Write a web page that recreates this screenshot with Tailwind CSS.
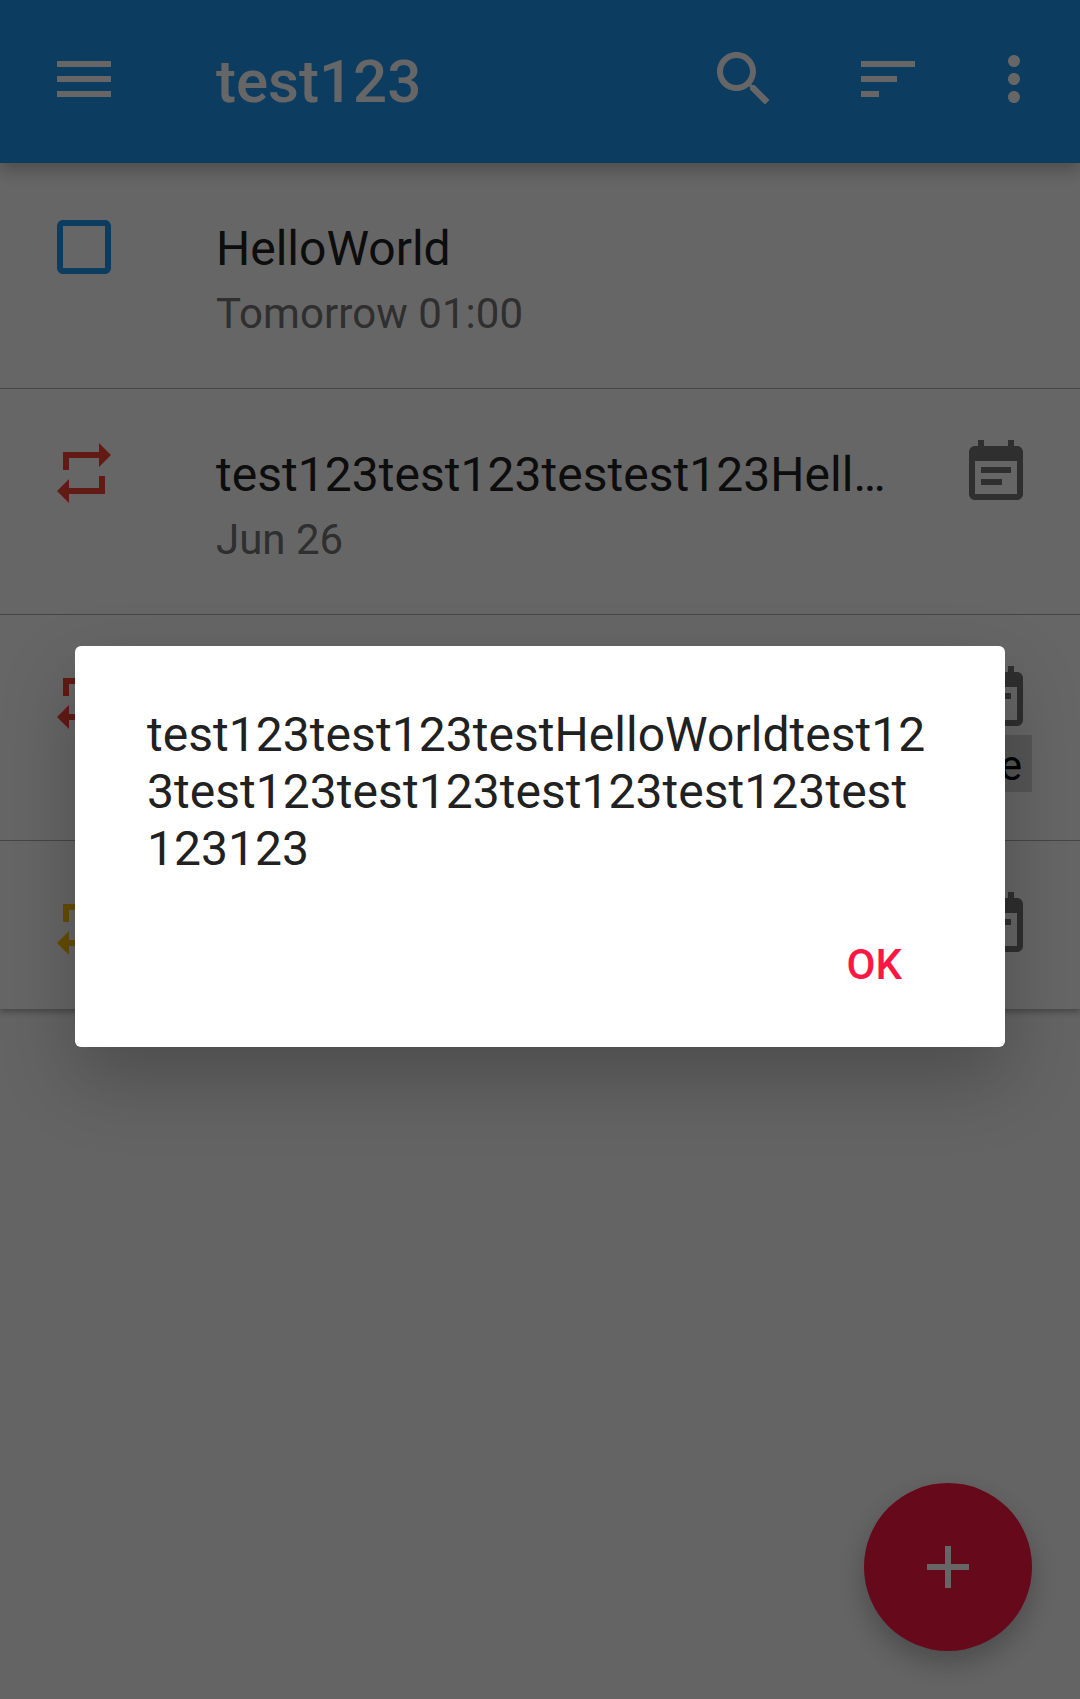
<!DOCTYPE html>
<html lang="en">
<head>
<meta charset="utf-8">
<title>test123</title>
<script src="https://cdn.jsdelivr.net/npm/@tailwindcss/browser@4"></script>
</head>
<body class="relative h-[1699px] w-[1080px] overflow-hidden bg-[#fafafa] font-['Roboto',sans-serif] text-[#212121]">
<svg class="hidden">
  <symbol id="repeat" viewBox="0 0 24 24"><path d="M7 7h10v3l4-4-4-4v3H5v6h2V7zm10 10H7v-3l-4 4 4 4v-3h12v-6h-2v4z"/></symbol>
  <symbol id="note" viewBox="0 0 24 24"><path d="M17 10H7v2h10v-2zm2-7h-1V1h-2v2H8V1H6v2H5c-1.11 0-1.99.9-1.99 2L3 19c0 1.1.89 2 2 2h14c1.1 0 2-.9 2-2V5c0-1.1-.9-2-2-2zm0 16H5V8h14v11zm-5-5H7v2h7v-2z"/></symbol>
</svg>

<header class="relative flex h-[163px] items-start bg-[#2196f3] pl-12 pt-[43px] text-white shadow-[0_8px_16px_rgba(0,0,0,0.24)]">
  <svg class="size-[72px] shrink-0" viewBox="0 0 24 24" fill="currentColor"><path d="M3 18h18v-2H3v2zm0-5h18v-2H3v2zm0-7v2h18V6H3z"/></svg>
  <h1 class="ml-24 w-[492px] pt-[4px] text-[60px] leading-[70px] font-medium">test123</h1>
  <svg class="size-[72px] shrink-0" viewBox="0 0 24 24" fill="currentColor"><path d="M15.5 14h-.79l-.28-.27C15.41 12.59 16 11.11 16 9.5 16 5.91 13.09 3 9.5 3S3 5.91 3 9.5 5.91 16 9.5 16c1.61 0 3.09-.59 4.23-1.57l.27.28v.79l5 4.99L20.49 19l-4.99-5zm-6 0C7.01 14 5 11.99 5 9.5S7.01 5 9.5 5 14 7.01 14 9.5 11.99 14 9.5 14z"/></svg>
  <svg class="ml-[72px] size-[72px] shrink-0" viewBox="0 0 24 24" fill="currentColor"><path d="M3 18h6v-2H3v2zM3 6v2h18V6H3zm0 7h12v-2H3v2z"/></svg>
  <svg class="ml-[54px] size-[72px] shrink-0" viewBox="0 0 24 24" fill="currentColor"><path d="M12 8c1.1 0 2-.9 2-2s-.9-2-2-2-2 .9-2 2 .9 2 2 2zm0 2c-1.1 0-2 .9-2 2s.9 2 2 2 2-.9 2-2-.9-2-2-2zm0 6c-1.1 0-2 .9-2 2s.9 2 2 2 2-.9 2-2-.9-2-2-2z"/></svg>
</header>

<main class="bg-white shadow-[0_3px_6px_rgba(0,0,0,0.3)]">
  <section class="flex h-[226px] border-b border-[#b0b0b0] px-12 pt-12">
    <svg class="size-[72px] shrink-0 text-[#2196f3]" viewBox="0 0 24 24" fill="currentColor"><path d="M19 5v14H5V5h14m0-2H5c-1.1 0-2 .9-2 2v14c0 1.1.9 2 2 2h14c1.1 0 2-.9 2-2V5c0-1.1-.9-2-2-2z"/></svg>
    <div class="ml-24 pt-[10px]">
      <h2 class="text-[48px] leading-[56px]">HelloWorld</h2>
      <p class="pt-[12px] text-[42px] leading-[50px] tracking-[0.06px] text-[#757575]">Tomorrow 01:00</p>
    </div>
  </section>
  <section class="flex h-[226px] border-b border-[#b0b0b0] px-12 pt-12">
    <svg class="size-[72px] shrink-0 fill-[#f44336]"><use href="#repeat"/></svg>
    <div class="ml-24 w-[744px] pt-[10px]">
      <h2 class="text-[48px] leading-[56px] tracking-[0.03px] whitespace-nowrap">test123test123testest123Hell…</h2>
      <p class="pt-[12px] text-[42px] leading-[50px] text-[#757575]">Jun 26</p>
    </div>
    <svg class="size-[72px] shrink-0 fill-[#757575]"><use href="#note"/></svg>
  </section>
  <section class="flex h-[226px] justify-between border-b border-[#b0b0b0] px-12 pt-12">
    <svg class="size-[72px] shrink-0 fill-[#f44336]"><use href="#repeat"/></svg>
    <div class="flex flex-col items-end">
      <svg class="size-[72px] shrink-0 fill-[#757575]"><use href="#note"/></svg>
      <span class="h-[57px] w-[80px] bg-[#d6d6d6] pr-[10px] text-right text-[42px] leading-[62px] text-black">e</span>
    </div>
  </section>
  <section class="flex h-[168px] justify-between px-12 pt-12">
    <svg class="size-[72px] shrink-0 fill-[#ffc107]"><use href="#repeat"/></svg>
    <svg class="size-[72px] shrink-0 fill-[#757575]"><use href="#note"/></svg>
  </section>
</main>

<button class="absolute right-12 bottom-12 flex size-[168px] items-center justify-center rounded-full bg-[#ff1744] text-white shadow-[0_12px_28px_rgba(0,0,0,0.25)]">
  <svg class="size-[72px]" viewBox="0 0 24 24" fill="currentColor"><path d="M19 13h-6v6h-2v-6H5v-2h6V5h2v6h6v2z"/></svg>
</button>

<div class="absolute inset-0 bg-black/60"></div>

<div role="dialog" class="absolute top-[646px] left-[75px] flex h-[401px] w-[930px] flex-col items-end rounded-[6px] bg-white px-[72px] pt-[60px] shadow-[0_32px_76px_rgba(0,0,0,0.24)]">
  <p class="w-full text-[48px] leading-[57px] tracking-[0.04px]">test123test123testHelloWorldtest12<br>3test123test123test123test123test<br>123123</p>
  <button class="mt-[63px] mr-[31px] text-[42px] leading-[50px] font-medium text-[#ff1744]">OK</button>
</div>
</body>
</html>
